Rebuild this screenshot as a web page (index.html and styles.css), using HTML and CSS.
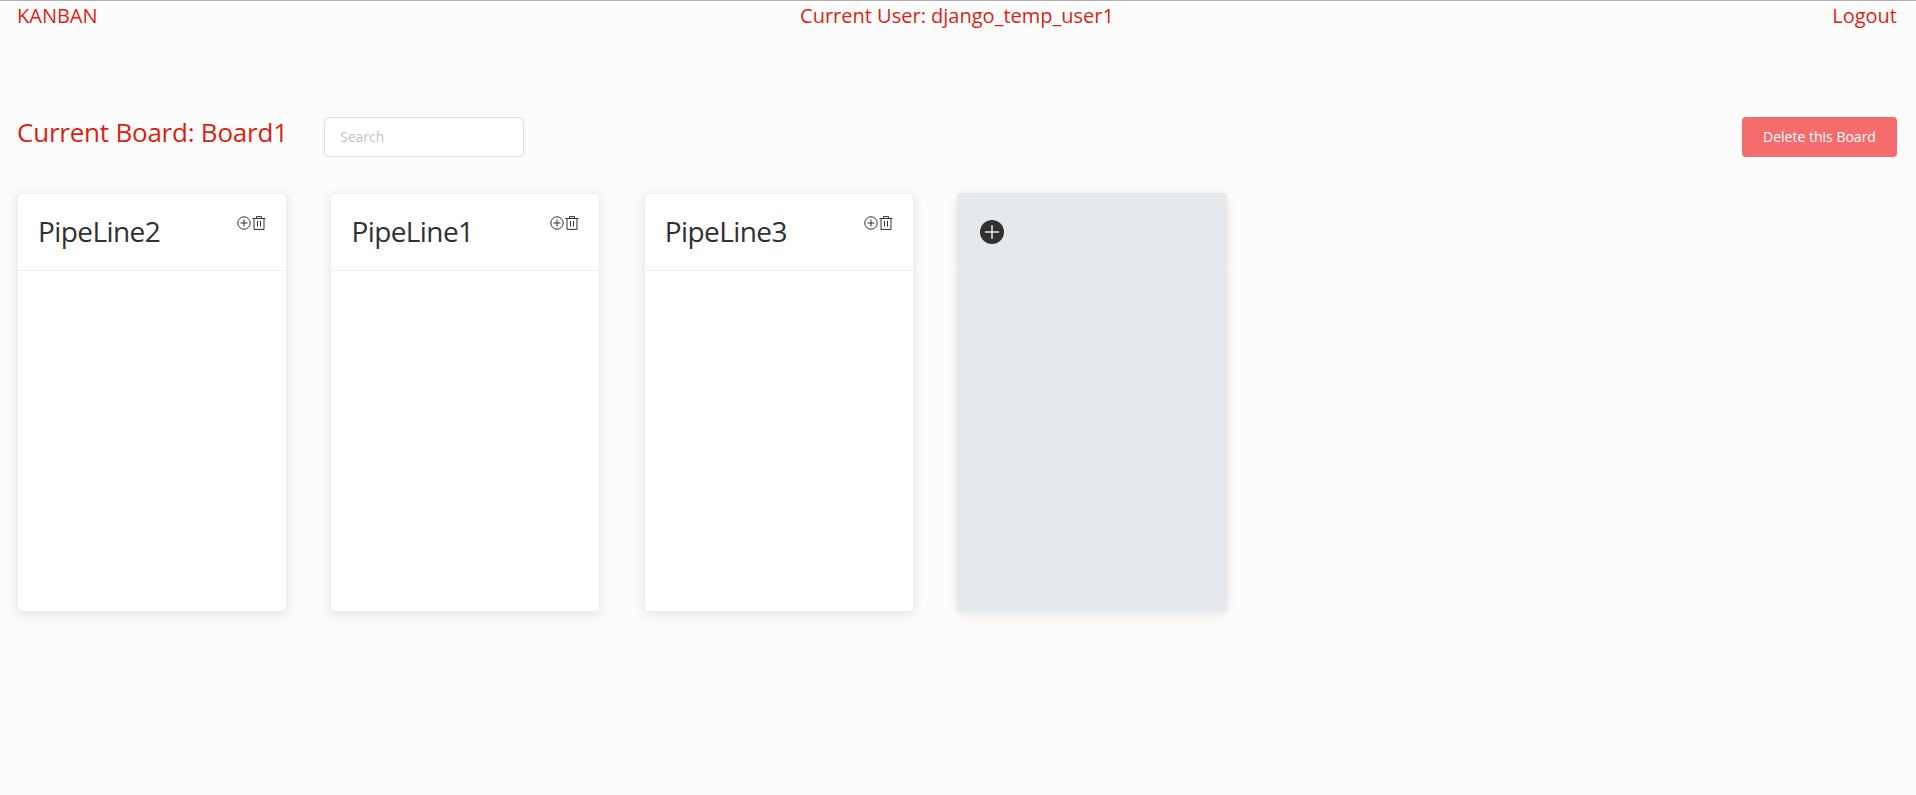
FILE: index.html
```html
<!DOCTYPE html>
<html lang="en">
<head>
<meta charset="utf-8">
<title>Kanban</title>
<link rel="stylesheet" href="styles.css">
</head>
<body>
<svg class="sprite" aria-hidden="true">
  <symbol id="plus" viewBox="0 0 14 14"><circle cx="7" cy="7" r="6.2"/><path d="M7 3.5v7M3.5 7h7"/></symbol>
  <symbol id="trash" viewBox="0 0 14 14"><path d="M.5 2.5h13M4.5 2V.6h5V2M2 2.5v10.9h10V2.5M5.5 5v5.5M8.5 5v5.5"/></symbol>
</svg>
<header class="topbar">
  <a class="brand">KANBAN</a>
  <span class="user">Current User: django_temp_user1</span>
  <a class="logout">Logout</a>
</header>
<section class="toolbar">
  <h1 class="board-title">Current Board: Board1</h1>
  <input class="search" type="text" placeholder="Search">
  <button class="delete">Delete this Board</button>
</section>
<main class="board">
  <article class="card">
    <header class="card-header"><h2 class="name">PipeLine2</h2><span class="actions"><svg class="icon"><use href="#plus"/></svg><svg class="icon"><use href="#trash"/></svg></span></header>
  </article>
  <article class="card">
    <header class="card-header"><h2 class="name">PipeLine1</h2><span class="actions"><svg class="icon"><use href="#plus"/></svg><svg class="icon"><use href="#trash"/></svg></span></header>
  </article>
  <article class="card">
    <header class="card-header"><h2 class="name">PipeLine3</h2><span class="actions"><svg class="icon"><use href="#plus"/></svg><svg class="icon"><use href="#trash"/></svg></span></header>
  </article>
  <article class="card new">
    <header class="card-header"><svg class="add" viewBox="0 0 24 24"><circle cx="12" cy="12" r="12"/><path d="M12 5v14M5 12h14"/></svg></header>
  </article>
</main>
</body>
</html>
```
FILE: styles.css
```css
* { box-sizing: border-box; }
body {
  margin: 0;
  height: 795px;
  padding: 0 19px 0 17px;
  border-top: 1px solid #b0b0b0;
  background: #fcfcfc;
  color: #303133;
  font-family: "Open Sans", sans-serif;
  overflow: hidden;
}
.sprite { display: none; }
.topbar {
  display: grid;
  grid-template-columns: 1fr auto 1fr;
  height: 116px;
  font-size: 20px;
  line-height: 30px;
  color: #dd1f11;
}
.logout { text-align: right; }
.toolbar { display: flex; height: 76px; align-items: flex-start; }
.board-title {
  width: 307px;
  margin: 0;
  font-size: 26px;
  font-weight: 400;
  line-height: 31px;
  letter-spacing: -.22px;
  color: #dd1f11;
}
.search {
  width: 200px;
  height: 40px;
  padding: 0 15px 2px;
  border: 1px solid #dcdfe6;
  border-radius: 4px;
  background: #fff;
  font: 14px "Open Sans", sans-serif;
}
.search::placeholder { color: #c0c4cc; }
.delete {
  width: 155px;
  height: 40px;
  margin-left: auto;
  padding: 0 0 2px;
  border: 0;
  border-radius: 4px;
  background: #f56c6c;
  color: #fff;
  font: 14px "Open Sans", sans-serif;
}
.board { display: flex; gap: 43.4px; }
.card {
  flex: none;
  width: 270px;
  height: 419px;
  border: 1px solid #ebeef5;
  border-radius: 4px;
  background: #fff;
  box-shadow: 0 2px 12px rgba(0, 0, 0, .1);
}
.card-header {
  display: flex;
  justify-content: space-between;
  height: 77px;
  padding: 18px 20px;
  border-bottom: 1px solid #ebeef5;
}
.name {
  margin: -1px 0 0;
  font-size: 28px;
  font-weight: 400;
  line-height: 40px;
  letter-spacing: -.58px;
}
.actions { display: flex; height: 14px; margin-top: 3.5px; gap: 1px; }
.icon { width: 14px; height: 14px; fill: none; stroke: #303133; stroke-width: 1; }
.new { background: #e5e9ec; border-color: #e6eaee; }
.add { width: 24px; height: 24px; margin: 8px 0 0 1.5px; fill: #303133; stroke: none; }
.add path { stroke: #e5e9ec; stroke-width: 1.5; }
```
